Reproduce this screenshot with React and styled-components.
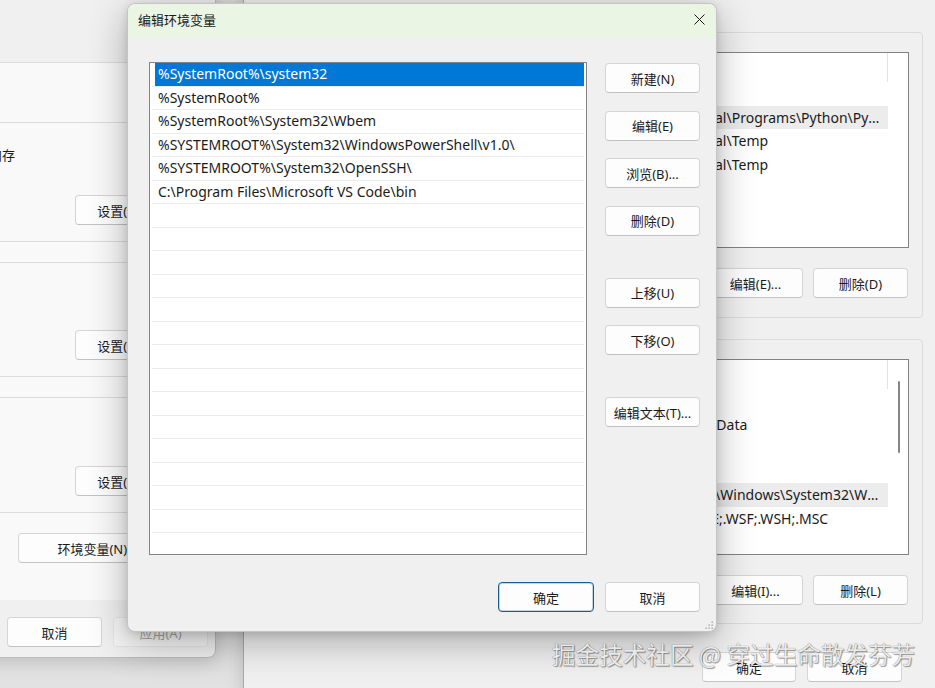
import React from 'react';
import styled, { createGlobalStyle, css } from 'styled-components';

const UI_FONT = `"Noto Sans", "Noto Sans CJK SC", sans-serif`;

const GlobalStyle = createGlobalStyle`
  html, body {
    margin: 0;
    padding: 0;
  }
  body {
    width: 935px;
    height: 688px;
    overflow: hidden;
    font-family: ${UI_FONT};
    font-size: 13px;
    color: #1b1b1b;
    background: #e2e2e2;
  }
`;

const Desktop = styled.div`
  position: relative;
  width: 935px;
  height: 688px;
  overflow: hidden;
  background: #e2e2e2;
`;

// every window sits on the desktop at its own spot
const Window = styled.div`
  position: absolute;
  left: ${(p) => p.$x}px;
  top: ${(p) => p.$y}px;
  width: ${(p) => p.$w}px;
  height: ${(p) => p.$h}px;
  box-sizing: border-box;
  display: flex;
  flex-direction: column;
  background: #f0f0f0;
  border: 1px solid ${(p) => p.$border || '#bcbcbc'};
  border-radius: 8px;
  box-shadow: ${(p) => p.$shadow || '0 4px 18px rgba(0, 0, 0, 0.16)'};
  overflow: hidden;
`;

const TitleBar = styled.div`
  flex: none;
  box-sizing: border-box;
  display: flex;
  align-items: center;
  height: ${(p) => p.$h}px;
  padding: 0 0 ${(p) => p.$lift || 0}px 10px;
  background: ${(p) => p.$tint || '#f0f0f0'};
  font-size: 13px;
  color: #1b1b1b;
`;

const TitleText = styled.span`
  flex: 1;
`;

const CloseButton = styled.div`
  width: 34px;
  height: 100%;
  display: flex;
  align-items: center;
  justify-content: center;
`;

const Button = styled.button`
  flex: none;
  box-sizing: border-box;
  width: ${(p) => p.$w || 95}px;
  height: 30px;
  padding: 0;
  font-family: ${UI_FONT};
  font-size: 13px;
  color: #1b1b1b;
  background: #fdfdfd;
  border: 1px solid #d5d5d5;
  border-bottom-color: #c2c2c2;
  border-radius: 4px;
  ${(p) =>
    p.$primary &&
    css`
      border: 1px solid #1b5b8a;
      box-shadow: inset 0 0 0 1px rgba(27, 91, 138, 0.25);
    `}
  ${(p) =>
    p.disabled &&
    css`
      color: #a6a6a6;
      background: #f6f6f6;
      border-color: #e6e6e6;
    `}
`;

/* ---------- 系统属性 (behind, left) ---------- */

const TabStrip = styled.div`
  flex: none;
  height: 62px;
`;

const TabPage = styled.div`
  flex: none;
  height: 538px;
  box-sizing: border-box;
  margin: 0 14px;
  padding: 0 12px;
  display: flex;
  flex-direction: column;
  background: #f9f9f9;
  border-top: 1px solid #dcdcdc;
`;

const Note = styled.div`
  height: 22px;
  margin: 18px 0 19px;
  line-height: 22px;
  white-space: nowrap;
`;

const GroupBox = styled.div`
  position: relative;
  flex: none;
  box-sizing: border-box;
  height: ${(p) => p.$h}px;
  margin-top: ${(p) => p.$mt || 0}px;
  padding: 0 11px;
  display: flex;
  flex-direction: column;
  border: 1px solid #dcdcdc;
  border-radius: 4px;
`;

const Legend = styled.span`
  position: absolute;
  top: -10px;
  left: 8px;
  padding: 0 3px;
  line-height: 18px;
  background: inherit;
`;

const GroupText = styled.div`
  margin-top: 22px;
  line-height: 20px;
  white-space: nowrap;
`;

const SettingsButton = styled(Button)`
  align-self: flex-end;
  margin-top: ${(p) => p.$mt}px;
  padding-right: 6px;
`;

const EnvButton = styled(Button)`
  align-self: flex-end;
  margin: 20px 12px 0 0;
`;

const WindowFooter = styled.div`
  display: flex;
  justify-content: flex-end;
  gap: ${(p) => p.$gap || 11}px;
  margin-top: ${(p) => p.$mt}px;
  padding-right: ${(p) => p.$pr}px;
`;

function SystemWindow() {
  return (
    <Window $x={-310} $y={-40} $w={526} $h={698}>
      <TitleBar $h={39}>
        <TitleText>系统属性</TitleText>
      </TitleBar>
      <TabStrip />
      <TabPage>
        <Note>要进行大多数更改，你必须作为管理员登录。</Note>
        <GroupBox $h={120}>
          <Legend>性能</Legend>
          <GroupText>视觉效果，处理器计划，内存使用，以及虚拟内存</GroupText>
          <SettingsButton $w={102} $mt={30}>
            设置(S)...
          </SettingsButton>
        </GroupBox>
        <GroupBox $h={115} $mt={20}>
          <Legend>用户配置文件</Legend>
          <GroupText>与登录帐户相关的桌面设置</GroupText>
          <SettingsButton $w={102} $mt={25}>
            设置(E)...
          </SettingsButton>
        </GroupBox>
        <GroupBox $h={116} $mt={20}>
          <Legend>启动和故障恢复</Legend>
          <GroupText>系统启动、系统故障和调试信息</GroupText>
          <SettingsButton $w={102} $mt={26}>
            设置(T)...
          </SettingsButton>
        </GroupBox>
        <EnvButton $w={159}>环境变量(N)...</EnvButton>
      </TabPage>
      <WindowFooter $mt={17} $pr={7}>
        <Button>确定</Button>
        <Button>取消</Button>
        <Button disabled>应用(A)</Button>
      </WindowFooter>
    </Window>
  );
}

/* ---------- 环境变量 (behind, right) ---------- */

const EnvBody = styled.div`
  display: flex;
  flex-direction: column;
  padding: 0 39px 0 14px;
`;

const VarGroup = styled.div`
  position: relative;
  flex: none;
  box-sizing: border-box;
  height: ${(p) => p.$h}px;
  margin-top: ${(p) => p.$mt}px;
  padding: 19px 13px 0 14px;
  border: 1px solid #dcdcdc;
  border-radius: 4px;
  background: #f0f0f0;
`;

const ListView = styled.div`
  position: relative;
  box-sizing: border-box;
  height: 196px;
  background: #fff;
  border: 1px solid #838383;
  overflow: hidden;
`;

const HeaderRow = styled.div`
  display: grid;
  grid-template-columns: ${(p) => p.$cols};
  height: 29px;
`;

const HeaderCell = styled.div`
  padding-left: 6px;
  line-height: 28px;
  border-right: 1px solid #e3e3e3;
`;

const VarRow = styled.div`
  display: grid;
  grid-template-columns: ${(p) => p.$cols};
  height: 23.5px;
  line-height: 23.5px;
  font-size: 14px;
`;

const VarCell = styled.div`
  padding: 0 6px;
  white-space: nowrap;
  overflow: hidden;
  text-overflow: ellipsis;
  background: ${(p) => (p.$selected ? '#ececec' : 'transparent')};
`;

const ScrollThumb = styled.div`
  position: absolute;
  top: 21px;
  right: 8px;
  width: 2px;
  height: 72px;
  border-radius: 1px;
  background: #858585;
`;

const GroupButtons = styled.div`
  display: flex;
  justify-content: flex-end;
  gap: 10px;
  margin-top: 20px;
  padding-right: 1px;
`;

const userVars = [
  ['OneDrive', '%USERPROFILE%\\OneDrive'],
  [
    'Path',
    '%USERPROFILE%\\AppData\\Local\\Programs\\Python\\Python312\\Scripts\\;%USERPROFILE%\\AppData\\Local\\Programs\\Python\\Python312\\;%USERPROFILE%\\AppData\\Local\\Microsoft\\WindowsApps;',
    true,
  ],
  ['TEMP', '%USERPROFILE%\\AppData\\Local\\Temp'],
  ['TMP', '%USERPROFILE%\\AppData\\Local\\Temp'],
];

const systemVars = [
  ['ComSpec', '%SystemRoot%\\system32\\cmd.exe'],
  ['DriverData', 'C:\\Windows\\System32\\Drivers\\DriverData'],
  ['NUMBER_OF_PROCESSORS', '8'],
  ['OS', 'Windows_NT'],
  [
    'Path',
    'C:\\Windows\\system32;C:\\Windows;C:\\Windows\\System32\\Wbem;C:\\Windows\\System32\\WindowsPowerShell\\v1.0\\;C:\\Windows\\System32\\OpenSSH\\',
    true,
  ],
  ['PATHEXT', '.COM;.EXE;.BAT;.CMD;.VBS;.VBE;.JS;.JSE;.WSF;.WSH;.MSC'],
  ['PROCESSOR_ARCHITECTURE', 'AMD64'],
];

function VarList({ cols, rows, scrollable }) {
  return (
    <ListView>
      <HeaderRow $cols={cols}>
        <HeaderCell>变量</HeaderCell>
        <HeaderCell>值</HeaderCell>
      </HeaderRow>
      {rows.map(([name, value, selected]) => (
        <VarRow key={name} $cols={cols}>
          <VarCell $selected={selected}>{name}</VarCell>
          <VarCell $selected={selected}>{value}</VarCell>
        </VarRow>
      ))}
      {scrollable && <ScrollThumb />}
    </ListView>
  );
}

function EnvWindow() {
  return (
    <Window $x={243} $y={-40} $w={720} $h={740} $border="#a9a9a9">
      <TitleBar $h={39}>
        <TitleText>环境变量</TitleText>
      </TitleBar>
      <EnvBody>
        <VarGroup $h={286} $mt={32}>
          <Legend>Administrator 的用户变量(U)</Legend>
          <VarList cols="232px 382px" rows={userVars} />
          <GroupButtons>
            <Button>新建(N)...</Button>
            <Button>编辑(E)...</Button>
            <Button>删除(D)</Button>
          </GroupButtons>
        </VarGroup>
        <VarGroup $h={285} $mt={21}>
          <Legend>系统变量(S)</Legend>
          <VarList cols="192px 422px" rows={systemVars} scrollable />
          <GroupButtons>
            <Button>新建(W)...</Button>
            <Button>编辑(I)...</Button>
            <Button>删除(L)</Button>
          </GroupButtons>
        </VarGroup>
        <WindowFooter $mt={28} $pr={21}>
          <Button $w={94}>确定</Button>
          <Button>取消</Button>
        </WindowFooter>
      </EnvBody>
    </Window>
  );
}

/* ---------- 编辑环境变量 (active dialog) ---------- */

const DialogBody = styled.div`
  position: relative;
  flex: 1;
  display: flex;
  flex-direction: column;
  padding: 24px 16px 19px 21px;
`;

const DialogMain = styled.div`
  display: flex;
  gap: 18px;
  height: 493px;
`;

const PathList = styled.div`
  flex: 1;
  box-sizing: border-box;
  padding: 0 2px;
  background: #fff;
  border: 1px solid #838383;
  overflow: hidden;
`;

const PathRow = styled.div`
  box-sizing: border-box;
  height: 23.5px;
  padding-left: 6px;
  line-height: 22.5px;
  font-size: 14px;
  white-space: nowrap;
  border-bottom: 1px solid #ebebeb;
  ${(p) =>
    p.$selected &&
    css`
      color: #fff;
      background: linear-gradient(to right, transparent 3px, #0078d7 3px);
    `}
`;

const SideColumn = styled.div`
  flex: none;
  display: flex;
  flex-direction: column;
  gap: 17.5px;
  width: 95px;
  padding-top: 1px;
`;

const SideButton = styled(Button)`
  margin-top: ${(p) => (p.$newGroup ? 24.5 : 0)}px;
`;

const ResizeGrip = styled.svg`
  position: absolute;
  right: 3px;
  bottom: 2px;
`;

const paths = [
  '%SystemRoot%\\system32',
  '%SystemRoot%',
  '%SystemRoot%\\System32\\Wbem',
  '%SYSTEMROOT%\\System32\\WindowsPowerShell\\v1.0\\',
  '%SYSTEMROOT%\\System32\\OpenSSH\\',
  'C:\\Program Files\\Microsoft VS Code\\bin',
];

const ROW_COUNT = 21;

function EditDialog() {
  const rows = Array.from({ length: ROW_COUNT }, (_, i) => paths[i] || '');
  return (
    <Window
      $x={127}
      $y={3}
      $w={590}
      $h={629}
      $border="#c4c4c4"
      $shadow="0 10px 38px rgba(0, 0, 0, 0.3), 0 2px 8px rgba(0, 0, 0, 0.12)"
    >
      <TitleBar $h={34} $lift={4} $tint="#ebf5e3">
        <TitleText>编辑环境变量</TitleText>
        <CloseButton>
          <svg width="11" height="11" viewBox="0 0 11 11">
            <path d="M0.5 0.5L10.5 10.5M10.5 0.5L0.5 10.5" stroke="#1b1b1b" strokeWidth="1" />
          </svg>
        </CloseButton>
      </TitleBar>
      <DialogBody>
        <DialogMain>
          <PathList>
            {rows.map((text, i) => (
              <PathRow key={i} $selected={i === 0}>
                {text}
              </PathRow>
            ))}
          </PathList>
          <SideColumn>
            <SideButton>新建(N)</SideButton>
            <SideButton>编辑(E)</SideButton>
            <SideButton>浏览(B)...</SideButton>
            <SideButton>删除(D)</SideButton>
            <SideButton $newGroup>上移(U)</SideButton>
            <SideButton>下移(O)</SideButton>
            <SideButton $newGroup>编辑文本(T)...</SideButton>
          </SideColumn>
        </DialogMain>
        <WindowFooter $mt={27} $pr={0}>
          <Button $w={96} $primary>
            确定
          </Button>
          <Button>取消</Button>
        </WindowFooter>
        <ResizeGrip width="8" height="8" viewBox="0 0 8 8">
          {[
            [6.5, 0.5],
            [6.5, 3.5],
            [3.5, 3.5],
            [6.5, 6.5],
            [3.5, 6.5],
            [0.5, 6.5],
          ].map(([x, y]) => (
            <rect key={`${x}-${y}`} x={x} y={y} width="1.3" height="1.3" fill="#9a9a9a" />
          ))}
        </ResizeGrip>
      </DialogBody>
    </Window>
  );
}

const Watermark = styled.div`
  position: absolute;
  left: 552px;
  top: 638px;
  font-family: "Noto Sans CJK SC", sans-serif;
  font-size: 23.6px;
  line-height: 32px;
  white-space: nowrap;
  color: rgba(250, 250, 250, 0.92);
  text-shadow: 0 0 1px rgba(0, 0, 0, 0.6), 1px 1px 1px rgba(0, 0, 0, 0.35);
  pointer-events: none;
`;

export default function App() {
  return (
    <>
      <GlobalStyle />
      <Desktop>
        <SystemWindow />
        <EnvWindow />
        <EditDialog />
        <Watermark>掘金技术社区 @ 穿过生命散发芬芳</Watermark>
      </Desktop>
    </>
  );
}
